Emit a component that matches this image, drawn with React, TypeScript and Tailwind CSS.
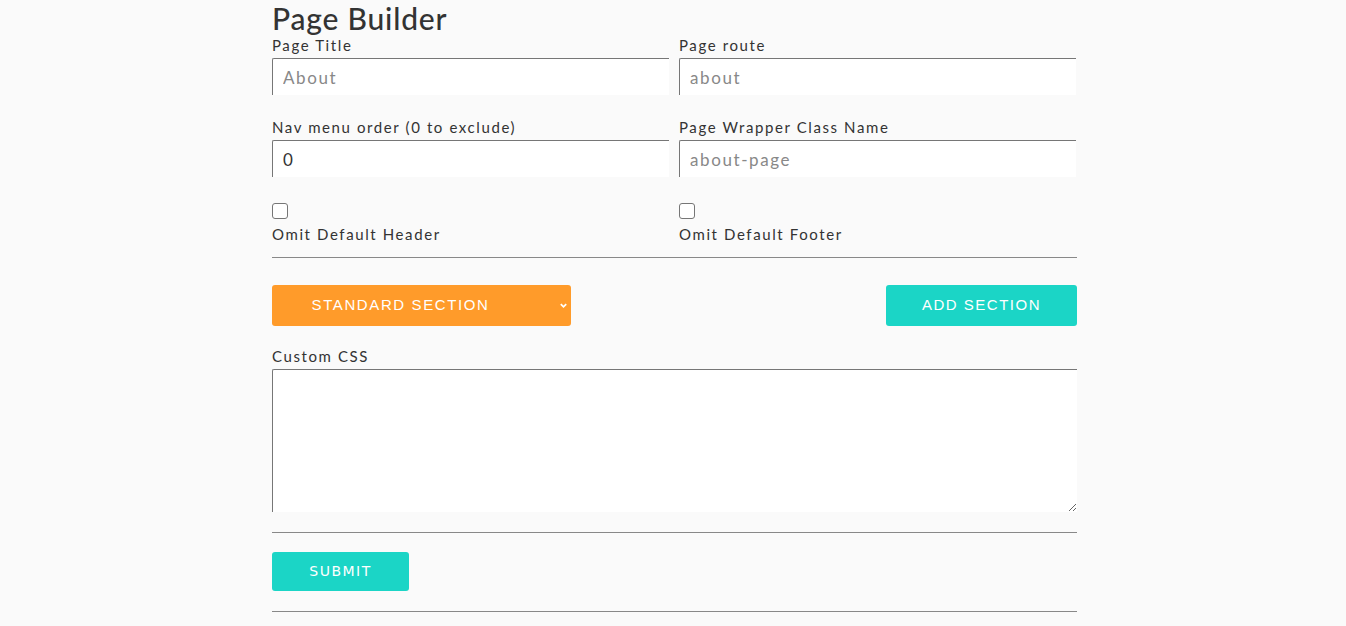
import { useState } from "react"

function Field({ label, placeholder, value }: { label: string; placeholder?: string; value?: string }) {
  return (
    <div className="flex flex-col">
      <label className="text-[15px] leading-[20px] tracking-[1.6px] text-[#333]">{label}</label>
      <input
        defaultValue={value}
        placeholder={placeholder}
        className="mt-[3px] h-[37px] w-full rounded-tl-[2px] border-t border-l border-[#767676] bg-white px-[10px] text-[17px] tracking-[1.6px] text-[#333] outline-none placeholder:text-[#888]"
      />
    </div>
  )
}

function Check({ label }: { label: string }) {
  return (
    <div className="flex flex-col items-start">
      <input type="checkbox" className="mt-[1px] h-[16px] w-[16px] appearance-none rounded-[3px] border border-[#767676] bg-white" />
      <span className="mt-[5px] text-[15px] leading-[20px] tracking-[1.6px] text-[#333]">{label}</span>
    </div>
  )
}

export default function App() {
  const [section, setSection] = useState("standard")

  return (
    <div className="min-h-[626px] bg-[#fafafa] font-['Lato',sans-serif]">
      <div className="mx-auto w-[808px] pl-[3px] pt-[2px]">
        <h1 className="text-[30px] leading-[33px] font-medium tracking-[0.8px] text-[#333]">Page Builder</h1>

        {/* Basic fields */}
        <div className="grid w-[804px] grid-cols-2 gap-x-[10px] gap-y-[22px]">
          <Field label="Page Title" placeholder="About" />
          <Field label="Page route" placeholder="about" />
          <Field label="Nav menu order (0 to exclude)" value="0" />
          <Field label="Page Wrapper Class Name" placeholder="about-page" />
        </div>

        <div className="mt-[25px] grid w-[804px] grid-cols-2 gap-x-[10px]">
          <Check label="Omit Default Header" />
          <Check label="Omit Default Footer" />
        </div>

        <hr className="mt-[13px] border-t border-[#888]" />

        {/* Section controls */}
        <div className="mt-[27px] flex items-center justify-between">
          <div className="relative w-[299px]">
            <select
              value={section}
              onChange={(e) => setSection(e.target.value)}
              className="h-[41px] w-full appearance-none rounded-[3px] bg-[#ff9b2a] pr-[42px] text-center font-['Liberation_Sans',sans-serif] text-[15px] tracking-[1.6px] text-white outline-none"
            >
              <option value="standard">STANDARD SECTION</option>
              <option value="custom">CUSTOM SECTION</option>
            </select>
            <svg
              className="pointer-events-none absolute right-[3px] top-[16px] h-[9px] w-[9px]"
              viewBox="0 0 10 10"
              fill="none"
              stroke="white"
              strokeWidth="2"
            >
              <path d="M2 3.5 L5 6.5 L8 3.5" />
            </svg>
          </div>
          <button className="h-[41px] w-[191px] rounded-[3px] bg-[#1bd5c6] font-['Liberation_Sans',sans-serif] text-[15px] tracking-[1.5px] text-white">
            ADD SECTION
          </button>
        </div>

        {/* Custom CSS */}
        <div className="mt-[20px] flex flex-col">
          <label className="text-[15px] leading-[20px] tracking-[1.6px] text-[#333]">Custom CSS</label>
          <textarea className="mt-[3px] h-[143px] w-full rounded-tl-[2px] border-t border-l border-[#767676] bg-white p-[10px] outline-none" />
        </div>

        <hr className="mt-[20px] border-t border-[#888]" />

        <button className="mt-[19px] h-[39px] w-[137px] rounded-[3px] bg-[#1bd5c6] font-['DejaVu_Sans',sans-serif] text-[14px] tracking-[1.5px] text-white">
          SUBMIT
        </button>

        <hr className="mt-[20px] border-t border-[#888]" />
      </div>
    </div>
  )
}
